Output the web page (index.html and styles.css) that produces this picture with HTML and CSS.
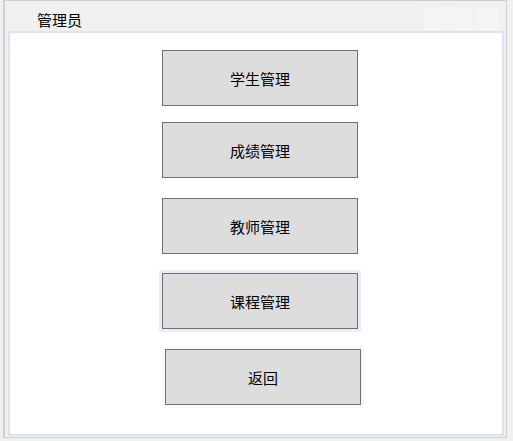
FILE: index.html
```html
<!DOCTYPE html>
<html lang="zh-CN">
<head>
<meta charset="utf-8">
<title>管理员</title>
<link rel="stylesheet" href="styles.css">
</head>
<body>
<div class="frame">
  <div class="header">
    <div class="tab-title">管理员</div>
    <div class="ctrls">
      <span class="ctrl"></span>
      <span class="ctrl"></span>
      <span class="ctrl"></span>
    </div>
  </div>
  <div class="panel">
    <div class="btn">学生管理</div>
    <div class="btn gap16">成绩管理</div>
    <div class="btn gap20">教师管理</div>
    <div class="btn gap19 focus">课程管理</div>
    <div class="btn gap20 back">返回</div>
  </div>
</div>
</body>
</html>
```

FILE: styles.css
```css
html, body {
  margin: 0;
  padding: 0;
}
body {
  width: 513px;
  height: 441px;
  background: #f0f0f0;
  font-family: "Noto Sans CJK SC", "Microsoft YaHei", sans-serif;
  color: #000;
  overflow: hidden;
}
.frame {
  box-sizing: border-box;
  margin-left: 3px;
  width: 504px;
  height: 438px;
  border: 1px solid #cfcfcf;
  border-left-width: 2px;
  display: flex;
  flex-direction: column;
}
.header {
  height: 30px;
  display: flex;
  justify-content: space-between;
  align-items: flex-start;
}
.tab-title {
  margin-left: 32px;
  margin-top: 9px;
  font-size: 15px;
  line-height: 20px;
}
.ctrls {
  display: flex;
  gap: 2px;
  margin-top: 6px;
  margin-right: 7px;
}
.ctrl {
  width: 24px;
  height: 24px;
  background: #f4f4f4;
}
.panel {
  box-sizing: border-box;
  margin-left: 3px;
  margin-right: 2px;
  height: 405px;
  border: 2px solid #d9e3f3;
  background: #fff;
  display: flex;
  flex-direction: column;
  align-items: flex-start;
  padding-top: 17px;
  padding-left: 152px;
}
.btn {
  box-sizing: border-box;
  width: 196px;
  height: 56px;
  border: 1px solid #707070;
  background: #dddddd;
  display: flex;
  align-items: center;
  justify-content: center;
  font-size: 15px;
  line-height: 20px;
  padding-top: 1px;
}
.gap16 { margin-top: 16px; }
.gap19 { margin-top: 19px; }
.gap20 { margin-top: 20px; }
.focus {
  box-shadow: 0 0 0 3px #e7eef9;
}
.back {
  margin-left: 3px;
  box-shadow: 0 0 0 3px #f5f8fd;
}
```
